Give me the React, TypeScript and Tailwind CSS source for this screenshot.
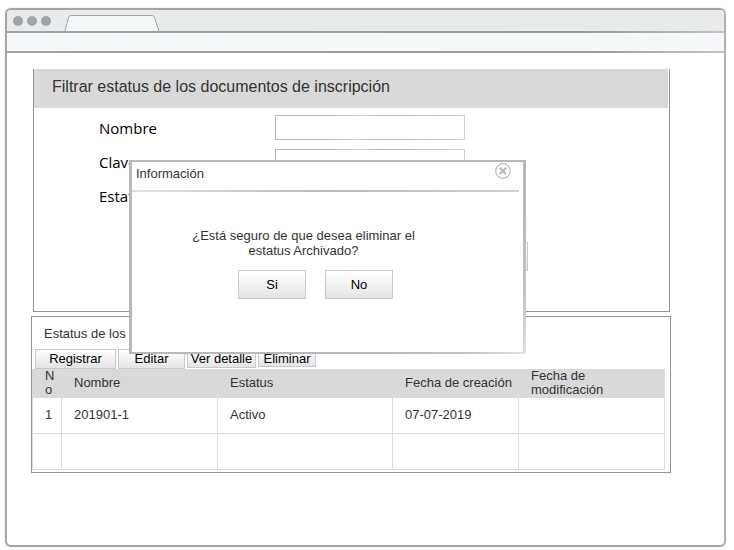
import React from "react";

const boxButton =
  "border border-[#c9c9c9] bg-linear-to-b from-white to-[#e4e4e4] text-center text-[13px] text-black";

function TitleBar() {
  return (
    <div className="flex h-[21px] items-end bg-[#e9eaec] pl-[6px]">
      <div className="flex gap-1 self-center">
        <span className="size-[10px] rounded-full bg-[#a1a5a7]" />
        <span className="size-[10px] rounded-full bg-[#a1a5a7]" />
        <span className="size-[10px] rounded-full bg-[#a1a5a7]" />
      </div>
      <svg className="ml-3 h-4 w-[98px]" viewBox="0 1 98 16" fill="none" aria-hidden="true">
        <path d="M2 17 L5.500 3.500 Q6 2 8 1.500 L89 1.500 Q91 2 91.500 3.500 L96 17 Z" fill="#f6f7f9" />
        <path d="M2 17 L5.500 3.500 Q6 1.500 8 1.500 L89 1.500 Q91 1.500 91.500 3.500 L96 17" stroke="#a1a5a7" />
        <path d="M32 1.200 H76" stroke="#a1a5a7" strokeWidth=".8" />
      </svg>
    </div>
  );
}

function Rule() {
  return <div className="h-[2px] bg-linear-to-r from-[#a1a5a7] via-[#94999a] via-80% to-[#c3c6c8]" />;
}

function Field({ id, label }: { id: string; label: string }) {
  return (
    <div className="flex h-[25px] items-center">
      <label htmlFor={id} className="w-44 pt-[2px] font-['Open_Sans',sans-serif] text-[15px] text-black">
        {label}
      </label>
      <input
        id={id}
        className="h-[25px] w-[190px] border bg-white px-2 text-[13px] outline-none [border-image:linear-gradient(100deg,#b7babc_30%,#d3d6d8_46%,#b7babc_52%,#bfc2c4_80%,#cfd2d4)_1]"
      />
    </div>
  );
}

function Filters() {
  return (
    <section className="mr-px ml-[2px] border border-t-0 border-[#939393]">
      <div className="mr-px h-[39px] bg-[#d9d9d9] pl-[18px]">
        <h1 className="text-base leading-9 text-[#333]">
          Filtrar estatus de los documentos de inscripción
        </h1>
      </div>
      <form className="flex flex-col gap-[9px] pt-[7px] pb-10 pl-[65px]">
        <Field id="nombre" label="Nombre" />
        <Field id="clave" label="Clave" />
        <Field id="estatus" label="Estatus" />
        <button type="button" aria-label="Buscar" className={`mt-[25px] ml-[361px] h-[29px] w-[68px] ${boxButton}`} />
      </form>
    </section>
  );
}

const rows = [
  ["1", "201901-1", "Activo", "07-07-2019", ""],
  ["", "", "", "", ""],
];

function Records() {
  return (
    <section className="mt-1 border border-[#939393]">
      <h2 className="h-8 pl-3 text-[13px] leading-[34px] text-[#333]">Estatus de los documentos</h2>
      <div className="flex items-start gap-[2px] pl-[3px]">
        <button type="button" className={`h-5 w-[81px] leading-[18px] ${boxButton}`}>Registrar</button>
        <button type="button" className={`h-5 w-[67px] leading-[18px] ${boxButton}`}>Editar</button>
        <button type="button" className={`h-[19px] w-[69px] leading-[18px] ${boxButton}`}>Ver detalle</button>
        <button type="button" className={`h-[18px] w-[58px] leading-[18px] ${boxButton}`}>Eliminar</button>
      </div>
      <div className="pr-[5px] pb-[2px]">
        <table className="w-full table-fixed border-collapse text-left text-[13px] text-[#333]">
          <colgroup>
            <col className="w-[29px]" />
            <col className="w-[156px]" />
            <col className="w-[175px]" />
            <col className="w-[126px]" />
            <col />
          </colgroup>
          <thead>
            <tr className="h-7 bg-[#d9d9d9] leading-[14px]">
              <th className="border-x border-[#dcdcdc] pr-2 pl-3 font-normal break-all">No</th>
              <th className="border-x border-[#dcdcdc] pl-3 font-normal">Nombre</th>
              <th className="border-x border-[#dcdcdc] pl-3 font-normal">Estatus</th>
              <th className="border-x border-[#dcdcdc] pl-3 font-normal whitespace-nowrap">Fecha de creación</th>
              <th className="border-x border-[#dcdcdc] pr-10 pl-3 font-normal">Fecha de modificación</th>
            </tr>
          </thead>
          <tbody>
            {rows.map((row, r) => (
              <tr key={r} className="h-9">
                {row.map((cell, c) => (
                  <td key={c} className="border border-[#dcdcdc] pb-[2px] pl-3">{cell}</td>
                ))}
              </tr>
            ))}
          </tbody>
        </table>
      </div>
    </section>
  );
}

function ConfirmDialog() {
  return (
    <div
      role="dialog"
      aria-label="Información"
      className="absolute top-[107px] left-[122px] flex h-[194px] w-[397px] flex-col border-2 border-x-[3px] bg-white [border-image:linear-gradient(135deg,#b4b9bb_75%,#c0c4c6_90%,#e0e3e4)_3]"
    >
      <header className="flex h-7 items-start justify-between pr-3 pl-1">
        <h2 className="text-[13px] leading-[23px] text-[#333]">Información</h2>
        <button type="button" aria-label="Cerrar" className="mt-px">
          <svg className="size-4" viewBox="0 0 16 16" fill="none" stroke="#b5b9bb" aria-hidden="true">
            <circle cx="8" cy="8" r="7.300" strokeWidth="1.200" />
            <path d="M4.800 4.800 L11.200 11.200 M11.200 4.800 L4.800 11.200" strokeWidth="2" />
          </svg>
        </button>
      </header>
      <div className="mr-1 h-[2px] bg-linear-to-r from-[#e1e4e5] via-[#b7bbbd] to-[#cdd1d3]" />
      <div className="flex flex-col items-center pt-9 pr-12">
        <p className="w-60 text-center text-[13px] leading-[15px] text-[#333]">
          ¿Está seguro de que desea eliminar el estatus Archivado?
        </p>
        <div className="mt-3 ml-6 flex gap-[19px]">
          <button type="button" className={`h-[29px] w-[68px] ${boxButton}`}>Si</button>
          <button type="button" className={`h-[29px] w-[68px] ${boxButton}`}>No</button>
        </div>
      </div>
    </div>
  );
}

export default function App() {
  return (
    <div className="flex min-h-screen bg-white pt-2 pr-2 pb-[3px] pl-[5px] font-['Liberation_Sans',Arial,sans-serif]">
      <div className="flex flex-1 flex-col overflow-hidden rounded-md border-2 border-[#a1a5a7] border-r-[#afb3b5] shadow-[0_0_1px_#b0b4b6]">
        <TitleBar />
        <Rule />
        <div className="h-[18px] bg-[#f6f7f9]" />
        <Rule />
        <main className="relative flex-1 pt-4 pr-[53px] pl-6">
          <Filters />
          <Records />
          <ConfirmDialog />
        </main>
      </div>
    </div>
  );
}
